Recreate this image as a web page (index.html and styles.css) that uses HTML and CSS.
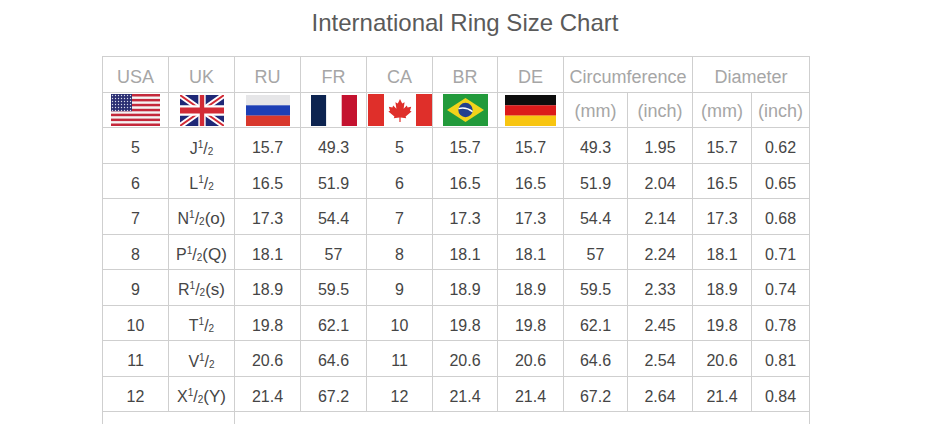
FILE: index.html
```html
<!DOCTYPE html>
<html>
<head>
<meta charset="utf-8">
<link rel="stylesheet" href="styles.css">
</head>
<body>
<h1 class="title">International Ring Size Chart</h1>
<table class="chart">
  <colgroup>
    <col class="c66"><col class="c66"><col class="c66"><col class="c66"><col class="c66"><col class="c65"><col class="c66"><col class="c64"><col class="c65"><col class="c59"><col class="c58">
  </colgroup>
  <thead>
    <tr class="hrow">
      <th>USA</th><th>UK</th><th>RU</th><th>FR</th><th>CA</th><th>BR</th><th>DE</th>
      <th colspan="2">Circumference</th><th colspan="2">Diameter</th>
    </tr>
    <tr class="frow">
      <th class="fl">
        <svg class="flag" width="49" height="32" viewBox="0 0 49 32">
          <defs>
            <pattern id="stars" width="3" height="3" patternUnits="userSpaceOnUse">
              <rect width="3" height="3" fill="#2b2f73"/>
              <circle cx="1.5" cy="1.5" r="0.7" fill="#d8dbea"/>
            </pattern>
          </defs>
          <rect width="49" height="32" fill="#f4f4f4"/>
          <rect y="0" width="49" height="2.5" fill="#c4283b"/>
          <rect y="4.9" width="49" height="2.5" fill="#c4283b"/>
          <rect y="9.8" width="49" height="2.5" fill="#c4283b"/>
          <rect y="14.8" width="49" height="2.5" fill="#c4283b"/>
          <rect y="19.7" width="49" height="2.5" fill="#c4283b"/>
          <rect y="24.6" width="49" height="2.5" fill="#c4283b"/>
          <rect y="29.5" width="49" height="2.5" fill="#c4283b"/>
          <rect width="21" height="17.2" fill="url(#stars)"/>
        </svg>
      </th>
      <th class="fl">
        <svg class="flag" width="44" height="31" viewBox="0 0 60 30" preserveAspectRatio="none">
          <rect width="60" height="30" fill="#1f2877"/>
          <path d="M0,0 L60,30 M60,0 L0,30" stroke="#fff" stroke-width="6"/>
          <path d="M0,0 L60,30 M60,0 L0,30" stroke="#d22a35" stroke-width="2"/>
          <path d="M30,0 V30 M0,15 H60" stroke="#fff" stroke-width="10"/>
          <path d="M30,0 V30 M0,15 H60" stroke="#d22a35" stroke-width="6"/>
        </svg>
      </th>
      <th class="fl">
        <svg class="flag" width="44" height="31" viewBox="0 0 44 31">
          <rect width="44" height="10.4" fill="#e6e6e8"/>
          <rect y="10.3" width="44" height="10.4" fill="#1d3fb5"/>
          <rect y="20.6" width="44" height="10.4" fill="#d8382c"/>
        </svg>
      </th>
      <th class="fl">
        <svg class="flag" width="46" height="31" viewBox="0 0 46 31">
          <rect width="15.3" height="31" fill="#0d2450"/>
          <rect x="15.3" width="15.4" height="31" fill="#ffffff"/>
          <rect x="30.7" width="15.3" height="31" fill="#c4122f"/>
        </svg>
      </th>
      <th class="fl">
        <svg class="flag" width="64" height="32" viewBox="0 0 64 32">
          <rect width="64" height="32" fill="#fff"/>
          <rect width="16" height="32" fill="#df2f2a"/>
          <rect x="48" width="16" height="32" fill="#df2f2a"/>
          <path fill="#df2f2a" d="M32,5 L34.2,9.4 L36.6,8.2 L35.6,14.8 L38.8,11.4 L39.6,13.4 L43.2,12.8 L42,16.8 L43.6,17.6 L37.6,22.4 L38.2,24.2 L32.6,23.4 L32.6,28 L31.4,28 L31.4,23.4 L25.8,24.2 L26.4,22.4 L20.4,17.6 L22,16.8 L20.8,12.8 L24.4,13.4 L25.2,11.4 L28.4,14.8 L27.4,8.2 L29.8,9.4 Z"/>
        </svg>
      </th>
      <th class="fl">
        <svg class="flag" width="45" height="32" viewBox="0 0 45 32">
          <rect width="45" height="32" fill="#229a3b"/>
          <path d="M22.5,4 L41,16 L22.5,28 L4,16 Z" fill="#f2d31b"/>
          <circle cx="22.5" cy="16" r="7.2" fill="#22408e"/>
          <path d="M15.6,14.6 Q23,12.6 29.5,17.6" stroke="#fff" stroke-width="1.4" fill="none"/>
        </svg>
      </th>
      <th class="fl">
        <svg class="flag" width="51" height="31" viewBox="0 0 51 31">
          <rect width="51" height="10.4" fill="#0d0d0d"/>
          <rect y="10.3" width="51" height="10.4" fill="#dc1a1a"/>
          <rect y="20.6" width="51" height="10.4" fill="#f8c510"/>
        </svg>
      </th>
      <th>(mm)</th><th>(inch)</th><th>(mm)</th><th>(inch)</th>
    </tr>
  </thead>
  <tbody>
    <tr><td>5</td><td>J<span class="fr"><span class="n">1</span>/<span class="d">2</span></span></td><td>15.7</td><td>49.3</td><td>5</td><td>15.7</td><td>15.7</td><td>49.3</td><td>1.95</td><td>15.7</td><td>0.62</td></tr>
    <tr><td>6</td><td>L<span class="fr"><span class="n">1</span>/<span class="d">2</span></span></td><td>16.5</td><td>51.9</td><td>6</td><td>16.5</td><td>16.5</td><td>51.9</td><td>2.04</td><td>16.5</td><td>0.65</td></tr>
    <tr><td>7</td><td>N<span class="fr"><span class="n">1</span>/<span class="d">2</span></span><span class="alt">(o)</span></td><td>17.3</td><td>54.4</td><td>7</td><td>17.3</td><td>17.3</td><td>54.4</td><td>2.14</td><td>17.3</td><td>0.68</td></tr>
    <tr><td>8</td><td>P<span class="fr"><span class="n">1</span>/<span class="d">2</span></span><span class="alt">(Q)</span></td><td>18.1</td><td>57</td><td>8</td><td>18.1</td><td>18.1</td><td>57</td><td>2.24</td><td>18.1</td><td>0.71</td></tr>
    <tr><td>9</td><td>R<span class="fr"><span class="n">1</span>/<span class="d">2</span></span><span class="alt">(s)</span></td><td>18.9</td><td>59.5</td><td>9</td><td>18.9</td><td>18.9</td><td>59.5</td><td>2.33</td><td>18.9</td><td>0.74</td></tr>
    <tr><td>10</td><td>T<span class="fr"><span class="n">1</span>/<span class="d">2</span></span></td><td>19.8</td><td>62.1</td><td>10</td><td>19.8</td><td>19.8</td><td>62.1</td><td>2.45</td><td>19.8</td><td>0.78</td></tr>
    <tr><td>11</td><td>V<span class="fr"><span class="n">1</span>/<span class="d">2</span></span></td><td>20.6</td><td>64.6</td><td>11</td><td>20.6</td><td>20.6</td><td>64.6</td><td>2.54</td><td>20.6</td><td>0.81</td></tr>
    <tr><td>12</td><td>X<span class="fr"><span class="n">1</span>/<span class="d">2</span></span><span class="alt">(Y)</span></td><td>21.4</td><td>67.2</td><td>12</td><td>21.4</td><td>21.4</td><td>67.2</td><td>2.64</td><td>21.4</td><td>0.84</td></tr>
    <tr class="last"><td colspan="2"></td><td colspan="9"></td></tr>
  </tbody>
</table>
</body>
</html>
```

FILE: styles.css
```css
html, body {
  margin: 0;
  padding: 0;
  background: #ffffff;
}
body {
  font-family: "Liberation Sans", Arial, sans-serif;
  width: 930px;
  height: 424px;
  overflow: hidden;
}
.title {
  margin: 9px 0 0 0;
  height: 47px;
  line-height: 28px;
  font-size: 24px;
  font-weight: normal;
  color: #5a5a5a;
  text-align: center;
}
.chart {
  margin-left: 102px;
  border-collapse: collapse;
  table-layout: fixed;
  width: 708px;
}
.c66 { width: 66px; }
.c65 { width: 65px; }
.c64 { width: 64px; }
.c59 { width: 59px; }
.c58 { width: 58px; }
.chart th, .chart td {
  border: 1px solid #cfcfcf;
  padding: 6px 0 0 0;
  text-align: center;
  vertical-align: middle;
  white-space: nowrap;
  overflow: hidden;
}
.chart th {
  font-size: 18px;
  font-weight: normal;
  color: #a6a6a6;
}
.hrow th { height: 29px; }
.frow th { height: 31px; padding-top: 3px; }
.frow th.fl { padding: 0; height: 34px; line-height: 0; }
.flag { display: inline-block; vertical-align: middle; }
.chart td {
  height: 28.5px;
  font-size: 16px;
  color: #454545;
}
.fr { font-size: 16px; }
.fr .n { font-size: 10px; vertical-align: 6px; }
.fr .d { font-size: 10px; vertical-align: -1px; }
.alt { font-size: 17px; }
.chart tr.last td { height: 24px; }
```
